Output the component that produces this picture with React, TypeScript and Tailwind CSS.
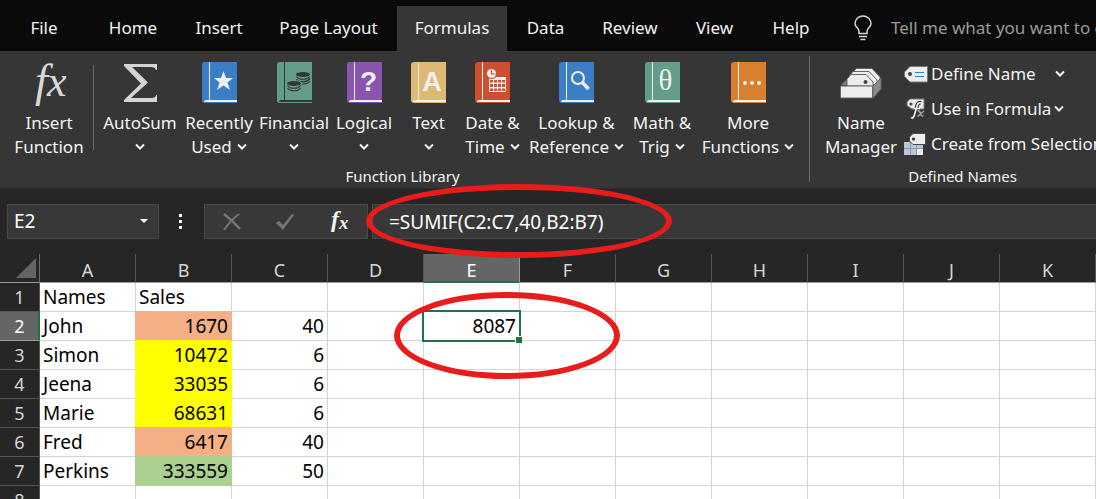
import type { ReactNode } from 'react';

const tabs = [
  { label: 'File', width: 'w-[88px]' },
  { label: 'Home', width: 'w-[90px]' },
  { label: 'Insert', width: 'w-[82px]' },
  { label: 'Page Layout', width: 'w-[137px]' },
  { label: 'Formulas', width: 'w-[110px]' },
  { label: 'Data', width: 'w-[77px]' },
  { label: 'Review', width: 'w-[92px]' },
  { label: 'View', width: 'w-[77px]' },
  { label: 'Help', width: 'w-[76px]' },
];

const columns = ['A', 'B', 'C', 'D', 'E', 'F', 'G', 'H', 'I', 'J', 'K'];

const ORANGE = 'bg-[#f4b084] border-[#f4b084] shadow-[-1px_-1px_0_0_#f4b084]';
const YELLOW = 'bg-[#ffff00] border-[#ffff00] shadow-[-1px_-1px_0_0_#ffff00]';
const GREEN = 'bg-[#a9d08e] border-[#a9d08e] shadow-[-1px_-1px_0_0_#a9d08e]';

const rows: { cells: Record<string, string>; fill?: string }[] = [
  { cells: { A: 'Names', B: 'Sales' } },
  { cells: { A: 'John', B: '1670', C: '40', E: '8087' }, fill: ORANGE },
  { cells: { A: 'Simon', B: '10472', C: '6' }, fill: YELLOW },
  { cells: { A: 'Jeena', B: '33035', C: '6' }, fill: YELLOW },
  { cells: { A: 'Marie', B: '68631', C: '6' }, fill: YELLOW },
  { cells: { A: 'Fred', B: '6417', C: '40' }, fill: ORANGE },
  { cells: { A: 'Perkins', B: '333559', C: '50' }, fill: GREEN },
  { cells: {} },
];

function Chevron() {
  return (
    <svg width="10" height="8" viewBox="0 0 10 8" fill="none" stroke="#f0f0f0" strokeWidth="2" className="shrink-0">
      <path d="M1 1.5 L5 5.5 L9 1.5" />
    </svg>
  );
}

function Book({ color, line = '#f0f0f0', children }: { color: string; line?: string; children: ReactNode }) {
  return (
    <svg width="35" height="41" viewBox="0 0 35 41">
      <path d="M3 0 H35 V41 H3 Q0 41 0 38 V3 Q0 0 3 0 Z" fill={color} />
      <path d="M7.5 0 V38" stroke={line} strokeWidth="1" />
      <path d="M2 40 Q2 38 4 38 H35 V40 Z" fill={line} />
      {children}
    </svg>
  );
}

function Coins({ x, y }: { x: number; y: number }) {
  return (
    <g transform={`translate(${x} ${y})`}>
      <ellipse cx="7" cy="2.5" rx="7" ry="2.5" fill="#363636" />
      <path d="M0.5 4.5 Q2 7.3 7 7.3 T13.5 4.5 M0.5 7 Q2 9.8 7 9.8 T13.5 7" fill="none" stroke="#363636" strokeWidth="1.1" />
    </g>
  );
}

const library = [
  {
    lines: ['AutoSum', ''],
    width: 'w-[82px]',
    icon: (
      <svg width="35" height="41" viewBox="0 0 35 41">
        <path d="M1 2 H34 V8 H33 Q32 5 28 5 H9 L25 20.5 L8 36 H28 Q33 36 33 33 H34 V40 H1 V38 L18 21.5 L1 4 Z" fill="#d4d4d4" />
      </svg>
    ),
  },
  {
    lines: ['Recently', 'Used'],
    width: 'w-[76px]',
    icon: (
      <Book color="#3a7ec6">
        <path d="M21.5 9 L24 16 H31 L25.5 20.5 L28 28 L21.5 23.5 L15 28 L17.5 20.5 L12 16 H19 Z" fill="#f0f0f0" />
      </Book>
    ),
  },
  {
    lines: ['Financial', ''],
    width: 'w-[74px]',
    icon: (
      <Book color="#639c88" line="#363636">
        <Coins x={19} y={10} />
        <path d="M24 19.5 Q31 20 33 16 M24 22 Q31 22.5 33 19" fill="none" stroke="#363636" strokeWidth="1.1" />
        <ellipse cx="17" cy="21.5" rx="8" ry="3.5" fill="#639c88" />
        <Coins x={10} y={19} />
      </Book>
    ),
  },
  {
    lines: ['Logical', ''],
    width: 'w-[66px]',
    icon: (
      <Book color="#8a55b0">
        <text x="21.5" y="29" textAnchor="middle" fill="#f0f0f0" className="font-['Liberation_Sans'] text-[28px] font-bold">?</text>
      </Book>
    ),
  },
  {
    lines: ['Text', ''],
    width: 'w-[63px]',
    icon: (
      <Book color="#dfb973">
        <text x="21" y="29" textAnchor="middle" fill="#f0f0f0" className="font-['Liberation_Sans'] text-[27px] font-bold">A</text>
      </Book>
    ),
  },
  {
    lines: ['Date &', 'Time'],
    width: 'w-[65px]',
    icon: (
      <Book color="#cb5030">
        <path d="M14 15 H31 V30 H14 Z" fill="#f0f0f0" />
        <path
          d="M15 18h3v2.5h-3z M19 18h3v2.5h-3z M23 18h3v2.5h-3z M27 18h3v2.5h-3z M15 22h3v3h-3z M19 22h3v3h-3z M23 22h3v3h-3z M27 22h3v3h-3z M15 26.5h3v2.5h-3z M19 26.5h3v2.5h-3z M23 26.5h3v2.5h-3z M27 26.5h3v2.5h-3z"
          fill="#cb5030"
        />
        <circle cx="16.5" cy="11.5" r="5.5" fill="#cb5030" />
        <circle cx="16.5" cy="11.5" r="4.5" fill="#f0f0f0" />
        <path d="M16.5 8 V12 H20" fill="none" stroke="#cb5030" strokeWidth="1.2" />
      </Book>
    ),
  },
  {
    lines: ['Lookup &', 'Reference'],
    width: 'w-[103px]',
    icon: (
      <Book color="#3a7ec6">
        <circle cx="19" cy="16" r="6" fill="none" stroke="#f0f0f0" strokeWidth="2" />
        <path d="M23.5 20.5 L29.5 27" stroke="#f0f0f0" strokeWidth="3.5" />
      </Book>
    ),
  },
  {
    lines: ['Math &', 'Trig'],
    width: 'w-[68px]',
    icon: (
      <Book color="#639c88">
        <text x="20.5" y="28" textAnchor="middle" fill="#f0f0f0" className="font-['Liberation_Serif'] text-[29px]">θ</text>
      </Book>
    ),
  },
  {
    lines: ['More', 'Functions'],
    width: 'w-[104px]',
    icon: (
      <Book color="#da7e30">
        <circle cx="14" cy="21" r="2" fill="#f0f0f0" />
        <circle cx="21" cy="21" r="2" fill="#f0f0f0" />
        <circle cx="28" cy="21" r="2" fill="#f0f0f0" />
      </Book>
    ),
  },
];

function TagIcon() {
  return (
    <svg width="24" height="17" viewBox="0 0 24 17">
      <path d="M6 0.5 H23.5 V16 H6 L0.5 10.5 V6 Z" fill="#ededed" stroke="#777" />
      <circle cx="6" cy="8" r="2" fill="#444" />
      <path d="M11 6.5 H20 M11 10.5 H20" stroke="#3a7ec6" strokeWidth="1.2" />
    </svg>
  );
}

function FormulaTagIcon() {
  return (
    <svg width="24" height="22" viewBox="0 0 24 22">
      <path d="M6 1 H20 V11 H8 L3 7.5 V4 Z" fill="#ededed" stroke="#777" />
      <circle cx="7" cy="6" r="1.6" fill="#444" />
      <path d="M8 20.5 Q10.5 21 11.5 15 L13 8 Q14 4 17 5" fill="none" stroke="#363636" strokeWidth="4" />
      <path d="M7 19.5 Q9.5 21.5 11 15 L13 8 Q14 4 17 5 M10 10.5 H16" fill="none" stroke="#f5f5f5" strokeWidth="1.6" />
      <path d="M13.5 13 Q15.5 12 16.5 15.500 Q17.5 19 19.5 17.5 M20 13 L13.5 18.5" fill="none" stroke="#a8a8a8" strokeWidth="1.5" />
    </svg>
  );
}

function SelectionTagIcon() {
  return (
    <svg width="24" height="23" viewBox="0 0 24 23">
      <path d="M0 9 H19 V22 H0 Z" fill="#b9c9da" />
      <path d="M13 16 H19 V22 H13 Z" fill="#ededed" />
      <path d="M6.5 9 V22 M12.5 9 V22 M0 15.5 H19" stroke="#8d9aa8" />
      <path d="M9 0.5 H21.5 V11.5 H9 L5.5 8 V4 Z" fill="#ededed" stroke="#4a4a4a" />
      <circle cx="9.5" cy="6" r="1.6" fill="#333" />
    </svg>
  );
}

function NameManagerIcon() {
  return (
    <svg width="42" height="41" viewBox="0 0 42 41" strokeLinejoin="round">
      <path d="M1 23 L6 18 H41 L34 23 Z" fill="#7b7b7b" />
      <path d="M14 9 L16 6.5 H32 L40 15 V21 H14 Z" fill="#ededed" stroke="#666" />
      <path d="M10 13 L13 9.5 H29 L37 18 V23 H10 Z" fill="#ededed" stroke="#666" />
      <path d="M7 24 V17 L11 12.5 H26 L33 20 V24 Z" fill="#ededed" stroke="#666" />
      <circle cx="25.5" cy="20" r="2" fill="#444" />
      <path d="M33 24 L41 16 V27 L33 36 Z" fill="#8a8a8a" stroke="#666" />
      <path d="M0.5 24 H32.5 V36 H0.5 Z" fill="#ededed" stroke="#666" />
    </svg>
  );
}

function Divider({ className }: { className: string }) {
  return <div className={`w-px shrink-0 bg-[#6a6a6a] ${className}`}></div>;
}

function MenuTabs() {
  return (
    <nav className="flex h-[51px] items-end overflow-hidden bg-[#0a0a0a]">
      {tabs.map((tab) => (
        <button
          key={tab.label}
          className={`h-[45px] shrink-0 whitespace-nowrap pb-0.5 text-[17px] text-[#f3f3f3] ${tab.width} ${
            tab.label === 'Formulas' ? 'bg-[#363636]' : ''
          }`}
        >
          {tab.label}
        </button>
      ))}
      <label className="flex h-[45px] min-w-0 flex-1 items-center gap-[18px] pb-0.5 pl-6">
        <svg width="20" height="26" viewBox="0 0 20 26" fill="none" stroke="#d8d8d8" strokeWidth="1.5" className="shrink-0">
          <path d="M6 18.5 V16.5 Q6 14.5 4 12.5 Q2 10.5 2 8.5 A8 7.5 0 0 1 18 8.5 Q18 10.5 16 12.5 Q14 14.5 14 16.5 V18.5 Z" />
          <path d="M6 21.5 H14 M7.5 24.5 H12.5" />
        </svg>
        <input
          aria-label="Tell me"
          placeholder="Tell me what you want to do"
          className="min-w-0 flex-1 bg-transparent text-[17px] outline-none placeholder:text-[#9a9a9a]"
        />
      </label>
    </nav>
  );
}

function Ribbon() {
  return (
    <section className="flex h-[138px] overflow-hidden border-b border-[#2b2b2b] bg-[#363636] text-[17px] leading-6 whitespace-nowrap text-[#f3f3f3]">
      <div className="flex shrink-0 flex-col pl-[5px]">
        <div className="flex h-[113px]">
          <button className="flex w-[88px] flex-col items-center gap-2 pt-[11px]">
            <svg width="40" height="41" viewBox="0 0 40 41" overflow="visible">
              <text x="6" y="34" fill="#d8d8d8" className="font-['Liberation_Serif'] text-[46px] italic">f</text>
              <text x="18" y="34" fill="#d8d8d8" className="font-['Liberation_Serif'] text-[44px] italic">x</text>
            </svg>
            <span>Insert<br />Function</span>
          </button>
          <Divider className="mt-3.5 mr-[5px] h-[85px]" />
          {library.map((item) => (
            <button key={item.lines[0]} className={`flex shrink-0 flex-col items-center pt-[11px] ${item.width}`}>
              {item.icon}
              <span className="mt-2">{item.lines[0]}</span>
              <span className="flex h-6 items-center gap-[5px]">
                {item.lines[1]}
                <Chevron />
              </span>
            </button>
          ))}
        </div>
        <div className="text-center text-[15px]">Function Library</div>
      </div>
      <Divider className="mt-[5px] ml-[9px] h-[126px]" />
      <div className="flex shrink-0 flex-col pl-3">
        <div className="flex h-[113px]">
          <button className="flex w-[78px] flex-col items-center gap-2 pt-[11px]">
            <NameManagerIcon />
            <span>Name<br />Manager</span>
          </button>
          <div className="flex flex-col gap-[11px] pt-[11px] pl-1">
            <button className="flex h-6 items-center gap-[3px]">
              <TagIcon />
              Define Name
              <span className="ml-4"><Chevron /></span>
            </button>
            <button className="flex h-6 items-center gap-[3px]">
              <FormulaTagIcon />
              Use in Formula
              <Chevron />
            </button>
            <button className="flex h-6 items-center gap-[3px]">
              <SelectionTagIcon />
              Create from Selection
            </button>
          </div>
        </div>
        <div className="text-center text-[15px]">Defined Names</div>
      </div>
    </section>
  );
}

function FormulaBar() {
  return (
    <section className="flex h-[65px] items-start bg-[#262626] pt-[15px] pl-[7px]">
      <div className="relative h-[35px] w-[152px] shrink-0 border border-[#484848] bg-[#383838]">
        <select aria-label="Name Box" className="h-full w-full appearance-none bg-transparent pl-1.5 text-[19px] text-white outline-none">
          <option>E2</option>
        </select>
        <svg width="8" height="4" viewBox="0 0 8 4" className="pointer-events-none absolute top-3.5 right-2.5">
          <path d="M0 0 H8 L4 4 Z" fill="#fff" />
        </svg>
      </div>
      <div className="flex h-[35px] w-[45px] shrink-0 flex-col items-center justify-center gap-[3px] pr-0.5">
        <span className="size-[3px] bg-white"></span>
        <span className="size-[3px] bg-white"></span>
        <span className="size-[3px] bg-white"></span>
      </div>
      <div className="flex h-[35px] w-[164px] shrink-0 items-center justify-between border border-[#484848] bg-[#383838] pr-[18px] pl-[17px]">
        <button aria-label="Cancel">
          <svg width="20" height="20" viewBox="0 0 20 20" stroke="#757575" fill="none">
            <path d="M2 2 Q10 8 18 17" strokeWidth="2.5" />
            <path d="M17 2 Q8 9 2 18" strokeWidth="2" />
          </svg>
        </button>
        <button aria-label="Enter">
          <svg width="20" height="20" viewBox="0 0 20 20">
            <path d="M1 11 L4 9 L8 13 L17 2 L19 3 L8 18 Z" fill="#757575" />
          </svg>
        </button>
        <button aria-label="Insert Function">
          <svg width="22" height="28" viewBox="0 0 22 28" overflow="visible">
            <text x="4" y="19" fill="#f0f0f0" className="font-['Liberation_Serif'] text-[24px] font-bold italic">f</text>
            <text x="12" y="21" fill="#f0f0f0" className="font-['Liberation_Serif'] text-[19px] font-bold italic">x</text>
          </svg>
        </button>
      </div>
      <div className="relative ml-1 h-[35px] min-w-0 flex-1 border-y border-l border-[#484848] bg-[#383838]">
        <input
          aria-label="Formula"
          defaultValue="=SUMIF(C2:C7,40,B2:B7)"
          className="h-full w-full bg-transparent pl-4 text-[19px] text-white outline-none"
        />
        <div className="pointer-events-none absolute -top-[21px] -left-[7px] h-[74px] w-[306px] rounded-[50%] border-6 border-[#e81c1c]"></div>
      </div>
    </section>
  );
}

function Sheet() {
  return (
    <table className="w-max table-fixed border-separate border-spacing-0 bg-white text-[19px] leading-7 text-black">
      <thead>
        <tr className="h-[29px] bg-[#262626] text-[18px] text-[#d6d6d6]">
          <th className="w-10 border-r border-b border-[#6a6a6a] border-b-[#9b9b9b] p-0">
            <svg width="20" height="20" viewBox="0 0 20 20" className="ml-4">
              <path d="M20 0 V20 H0 Z" fill="#656565" />
            </svg>
          </th>
          {columns.map((col) => (
            <th
              key={col}
              scope="col"
              className={`w-24 border-r border-b p-0 pt-1 font-normal leading-6 ${
                col === 'E'
                  ? 'border-[#9b9b9b] border-b-[#217346] bg-[#656565] text-white shadow-[inset_0_-1px_0_0_#217346]'
                  : 'border-[#555] border-b-[#9b9b9b]'
              }`}
            >
              {col}
            </th>
          ))}
        </tr>
      </thead>
      <tbody>
        {rows.map((row, i) => (
          <tr key={i} className="h-[29px]">
            <th
              scope="row"
              className={`border-r border-b p-0 text-center text-[18px] font-normal ${
                i === 1
                  ? 'border-[#9b9b9b] border-r-[#217346] bg-[#656565] text-white shadow-[inset_-1px_0_0_0_#217346]'
                  : 'border-[#555] bg-[#262626] text-[#d6d6d6]'
              }`}
            >
              {i + 1}
            </th>
            {columns.map((col) => {
              const text = row.cells[col];
              const left = col === 'A' || i === 0;
              const selected = col === 'E' && i === 1;
              return (
                <td
                  key={col}
                  className={`relative h-[29px] border-r border-b px-[3px] py-0 ${left ? 'text-left' : 'text-right'} ${
                    col === 'B' && row.fill ? row.fill : 'border-[#d4d4d4]'
                  }`}
                >
                  {text}
                  {selected && (
                    <>
                      <div className="pointer-events-none absolute -inset-0.5 z-10 border-2 border-[#217346]"></div>
                      <div className="absolute -right-[3px] -bottom-[3px] z-10 size-[7px] border-t border-l border-white bg-[#217346]"></div>
                      <div className="pointer-events-none absolute -top-5 -left-[30px] z-20 h-[87px] w-[226px] rounded-[50%] border-6 border-[#e81c1c]"></div>
                    </>
                  )}
                </td>
              );
            })}
          </tr>
        ))}
      </tbody>
    </table>
  );
}

export default function App() {
  return (
    <div className="flex h-screen flex-col overflow-hidden bg-white font-['Noto_Sans',sans-serif]">
      <MenuTabs />
      <Ribbon />
      <FormulaBar />
      <main className="min-h-0 flex-1 overflow-hidden">
        <Sheet />
      </main>
    </div>
  );
}
